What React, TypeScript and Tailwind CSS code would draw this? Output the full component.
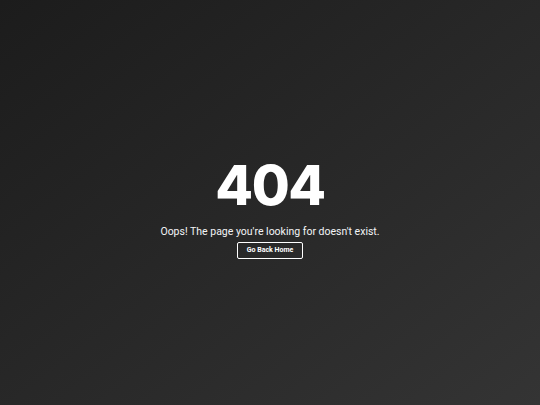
export default function App() {
  return (
    <div
      className="min-h-screen w-full flex flex-col items-center justify-center bg-gradient-to-br from-[#1c1c1c] to-[#343434] text-white pt-[12px]"
      style={{ fontFamily: "Roboto, Inter, sans-serif" }}
    >
      <h1
        className="text-[55px] font-extrabold leading-none tracking-tight"
        style={{ fontFamily: "Inter, sans-serif" }}
      >
        404
      </h1>
      <p className="mt-[12px] text-[10.5px] leading-[14px] text-gray-100">
        Oops! The page you're looking for doesn't exist.
      </p>
      <a
        href="/"
        className="mt-[3px] inline-flex h-[17px] items-center rounded-[2px] border border-white px-[9px] text-[7px] font-bold"
      >
        Go Back Home
      </a>
    </div>
  );
}
